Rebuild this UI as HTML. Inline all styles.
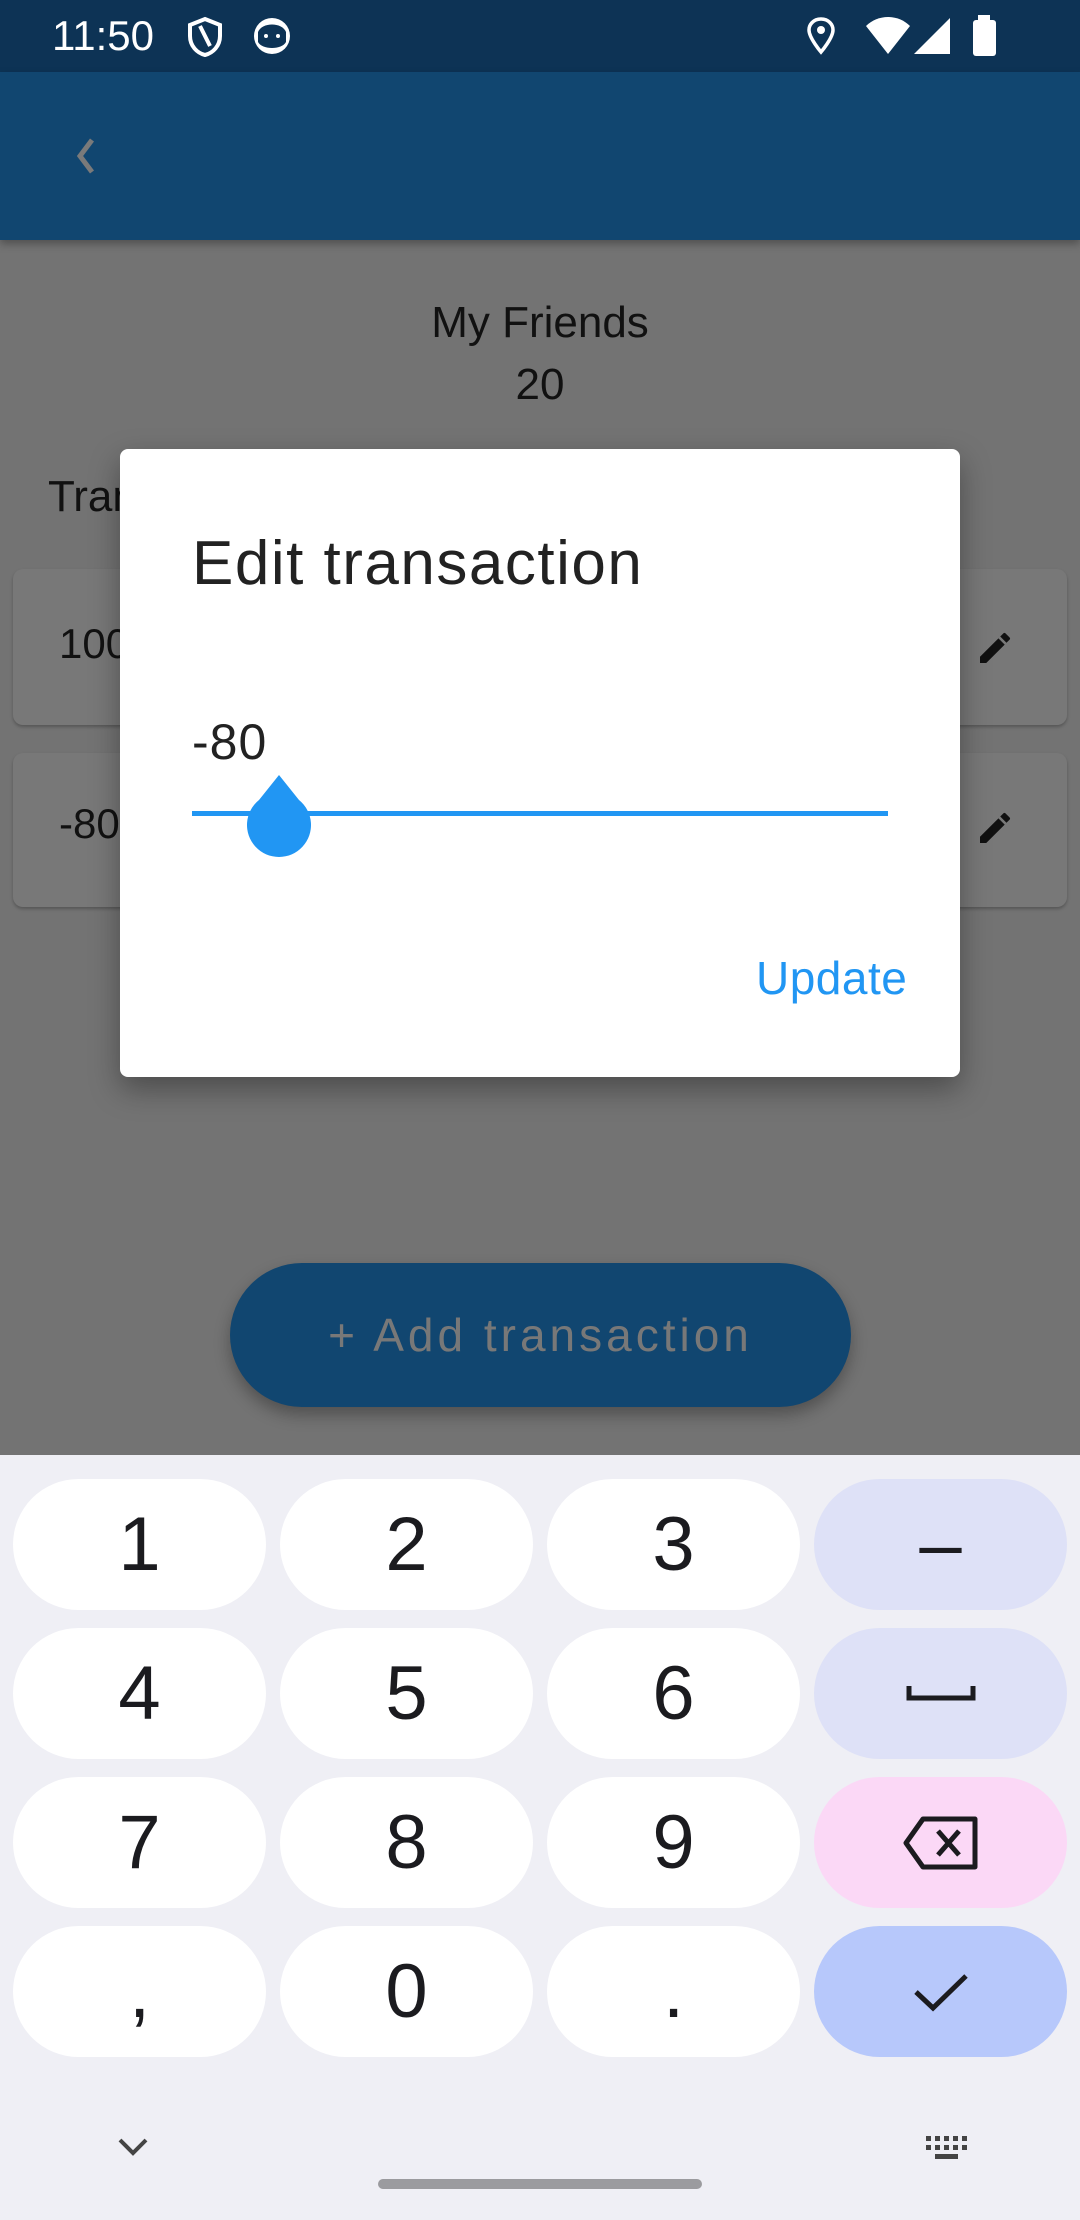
<!DOCTYPE html>
<html><head><meta charset="utf-8"><style>
*{margin:0;padding:0;box-sizing:border-box}
body{width:1080px;height:2220px;position:relative;overflow:hidden;background:#737373;font-family:"Liberation Sans",sans-serif}
.a{position:absolute}
.key{position:absolute;width:253px;height:131px;border-radius:66px;background:#fff;color:#1b1b1f;font-size:76px;text-align:center;line-height:131px}
</style></head><body>
<div class="a" style="left:0;top:0;width:1080px;height:72px;background:#0d3355"></div>
<div class="a" style="left:52px;top:10px;color:#fff;font-size:42px;line-height:52px">11:50</div>
<svg class="a" style="left:186px;top:16px" width="38" height="42" viewBox="0 0 38 42"><path d="M19 3 L34 9 V20 C34 30 27 37 19 39 C11 37 4 30 4 20 V9 Z" fill="none" stroke="#fff" stroke-width="4"/><path d="M14 10 L24 30" stroke="#fff" stroke-width="4"/></svg>
<svg class="a" style="left:252px;top:16px" width="40" height="40"><circle cx="20" cy="20" r="18" fill="#fff"/><path d="M6 16 C10 6 30 6 34 16 V26 C30 34 10 34 6 26 Z" fill="#0d3355"/><circle cx="14" cy="20" r="2" fill="#fff"/><circle cx="26" cy="20" r="2" fill="#fff"/></svg>
<svg class="a" style="left:806px;top:16px" width="30" height="40"><path d="M15 3 C7 3 3 9 3 14 C3 22 15 36 15 36 C15 36 27 22 27 14 C27 9 23 3 15 3 Z" fill="none" stroke="#fff" stroke-width="3.5"/><circle cx="15" cy="14" r="4" fill="#fff"/></svg>
<svg class="a" style="left:864px;top:16px" width="48" height="40"><path d="M2 10 C14 -2 34 -2 46 10 L24 38 Z" fill="#fff"/></svg>
<svg class="a" style="left:912px;top:16px" width="40" height="40"><path d="M38 2 V38 H2 Z" fill="#fff"/></svg>
<div class="a" style="left:973px;top:20px;width:23px;height:36px;background:#fff;border-radius:3px"></div>
<div class="a" style="left:978px;top:15px;width:12px;height:6px;background:#fff"></div>
<div class="a" style="left:0;top:72px;width:1080px;height:168px;background:#114670;box-shadow:0 4px 8px rgba(0,0,0,.3)"></div>
<svg class="a" style="left:70px;top:136px" width="30" height="40"><path d="M22 4 L10 20 L22 36" fill="none" stroke="#7a7a7a" stroke-width="5"/></svg>
<div class="a" style="left:0;top:298px;width:1080px;text-align:center;font-size:44px;color:#111">My Friends</div>
<div class="a" style="left:0;top:360px;width:1080px;text-align:center;font-size:44px;color:#111">20</div>
<div class="a" style="left:48px;top:472px;font-size:44px;color:#111">Transactions</div>
<div class="a" style="left:13px;top:569px;width:1054px;height:156px;background:#787878;border-radius:10px;box-shadow:0 2px 3px rgba(0,0,0,.25)"></div>
<div class="a" style="left:13px;top:753px;width:1054px;height:154px;background:#787878;border-radius:10px;box-shadow:0 2px 3px rgba(0,0,0,.25)"></div>
<div class="a" style="left:59px;top:620px;font-size:42px;color:#111">100</div>
<div class="a" style="left:59px;top:800px;font-size:42px;color:#111">-80</div>
<svg class="a" style="left:975px;top:628px" width="40" height="40" viewBox="0 0 24 24"><path d="M3 17.25V21h3.75L17.81 9.94l-3.75-3.75L3 17.25zM20.71 7.04a1 1 0 0 0 0-1.41l-2.34-2.34a1 1 0 0 0-1.41 0l-1.83 1.83 3.75 3.75 1.83-1.83z" fill="#111"/></svg>
<svg class="a" style="left:975px;top:808px" width="40" height="40" viewBox="0 0 24 24"><path d="M3 17.25V21h3.75L17.81 9.94l-3.75-3.75L3 17.25zM20.71 7.04a1 1 0 0 0 0-1.41l-2.34-2.34a1 1 0 0 0-1.41 0l-1.83 1.83 3.75 3.75 1.83-1.83z" fill="#111"/></svg>
<div class="a" style="left:120px;top:449px;width:840px;height:628px;background:#fff;border-radius:8px;box-shadow:0 12px 30px rgba(0,0,0,.35)"></div>
<div class="a" style="left:192px;top:528px;font-size:62px;letter-spacing:1.5px;color:#222;line-height:72px">Edit transaction</div>
<div class="a" style="left:192px;top:714px;font-size:50px;letter-spacing:1px;color:#222;line-height:56px">-80</div>
<div class="a" style="left:192px;top:811px;width:696px;height:5px;background:#2196f3"></div>
<svg class="a" style="left:244px;top:772px" width="70" height="86"><path d="M35 3 L55 28 A32 32 0 1 1 15 28 Z" fill="#2196f3"/></svg>
<div class="a" style="left:756px;top:952px;font-size:46px;letter-spacing:0.5px;color:#2196f3;line-height:52px">Update</div>
<div class="a" style="left:230px;top:1263px;width:621px;height:144px;border-radius:72px;background:#114670;box-shadow:0 8px 16px rgba(0,0,0,.3);text-align:center;line-height:144px;font-size:46px;color:#787878;letter-spacing:4px">+ Add transaction</div>
<div class="a" style="left:0;top:1455px;width:1080px;height:765px;background:#efeff5"></div>
<div class="key" style="left:13px;top:1479px">1</div>
<div class="key" style="left:280px;top:1479px">2</div>
<div class="key" style="left:547px;top:1479px">3</div>
<div class="key" style="left:814px;top:1479px;background:#dee1f7">–</div>
<div class="key" style="left:13px;top:1628px">4</div>
<div class="key" style="left:280px;top:1628px">5</div>
<div class="key" style="left:547px;top:1628px">6</div>
<div class="key" style="left:814px;top:1628px;background:#dee1f7"><svg width="70" height="131"><path d="M3 58 V70 H67 V58" fill="none" stroke="#1b1b1f" stroke-width="5"/></svg></div>
<div class="key" style="left:13px;top:1777px">7</div>
<div class="key" style="left:280px;top:1777px">8</div>
<div class="key" style="left:547px;top:1777px">9</div>
<div class="key" style="left:814px;top:1777px;background:#fbd8f6"><svg width="80" height="131" viewBox="0 0 80 131"><path d="M22 42 H74 V90 H22 L5 66 Z" fill="none" stroke="#1b1b1f" stroke-width="5" stroke-linejoin="round"/><path d="M37 54 L58 78 M58 54 L37 78" stroke="#1b1b1f" stroke-width="5"/></svg></div>
<div class="key" style="left:13px;top:1926px">,</div>
<div class="key" style="left:280px;top:1926px">0</div>
<div class="key" style="left:547px;top:1926px">.</div>
<div class="key" style="left:814px;top:1926px;background:#b7c8fb"><svg width="60" height="131"><path d="M5 66 L22 82 L55 50" fill="none" stroke="#1b1b1f" stroke-width="5"/></svg></div>
<svg class="a" style="left:116px;top:2134px" width="34" height="24"><path d="M4 6 L17 19 L30 6" fill="none" stroke="#444" stroke-width="4"/></svg>
<svg class="a" style="left:924px;top:2134px" width="48" height="30"><g fill="#444"><rect x="2" y="2" width="5" height="5"/><rect x="11" y="2" width="5" height="5"/><rect x="20" y="2" width="5" height="5"/><rect x="29" y="2" width="5" height="5"/><rect x="38" y="2" width="5" height="5"/><rect x="2" y="11" width="5" height="5"/><rect x="11" y="11" width="5" height="5"/><rect x="20" y="11" width="5" height="5"/><rect x="29" y="11" width="5" height="5"/><rect x="38" y="11" width="5" height="5"/><rect x="11" y="20" width="23" height="5"/></g></svg>
<div class="a" style="left:378px;top:2179px;width:324px;height:10px;border-radius:5px;background:#9b9b9f"></div>
</body></html>
